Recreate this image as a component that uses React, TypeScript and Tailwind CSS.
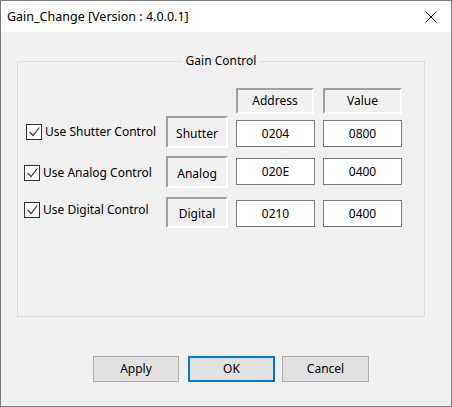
import React from "react";

const font = { fontFamily: '"Noto Sans", "Segoe UI", sans-serif' };

const CheckBox = () => (
  <span className="flex w-[16px] h-[16px] shrink-0 items-center justify-center border border-[#333333] bg-white">
    <svg width="14" height="14" viewBox="0 0 14 14" fill="none">
      <path d="M2.5 6.8 L6 10.5 L12.3 2.5" stroke="#333333" strokeWidth="1.2" />
    </svg>
  </span>
);

const Sunken = ({ children, className }: { children: React.ReactNode; className: string }) => (
  <div
    className={
      "flex items-center justify-center border-t-2 border-l-2 border-b-2 border-r-2 border-t-[#a0a0a0] border-l-[#a0a0a0] border-b-white border-r-white " +
      className
    }
  >
    {children}
  </div>
);

const Edit = ({ value, className }: { value: string; className: string }) => (
  <div className={"flex w-[79px] h-[27px] items-center justify-center border border-[#7a7a7a] bg-white " + className}>
    {value}
  </div>
);

interface RowProps {
  label: string;
  name: string;
  address: string;
  value: string;
  rowTop: string;
  boxH: string;
  checkTop: string;
  checkLeft: string;
  editTop: string;
}

const Row = ({ label, name, address, value, rowTop, boxH, checkTop, checkLeft, editTop }: RowProps) => (
  <div className={"flex items-start " + rowTop}>
    <div className={"flex w-[148px] items-center gap-[3px] " + checkTop + " " + checkLeft}>
      <CheckBox />
      <span className="leading-[16px]">{label}</span>
    </div>
    <Sunken className={"w-[62px] pt-[3px] " + boxH}>{name}</Sunken>
    <Edit value={address} className={"ml-[8px] " + editTop} />
    <Edit value={value} className={"ml-[8px] " + editTop} />
  </div>
);

export default function App() {
  return (
    <div
      className="flex w-[452px] h-[407px] flex-col border border-[#7a7a7a] bg-[#f0f0f0] text-[12px] text-black"
      style={font}
    >
      {/* Title bar */}
      <div className="flex h-[31px] shrink-0 items-center justify-between bg-white pl-[6px] pr-[14px]">
        <span className="text-[12.5px] leading-[20px]">Gain_Change [Version : 4.0.0.1]</span>
        <svg width="12" height="12" viewBox="0 0 12 12" fill="none">
          <path d="M0.5 0.5 L11.5 11.5 M11.5 0.5 L0.5 11.5" stroke="#111111" strokeWidth="1" />
        </svg>
      </div>

      {/* Client area */}
      <div className="flex flex-col">
        <fieldset className="ml-[16px] mt-[21px] w-[408px] h-[264px] border border-[#dcdcdc] p-0">
          <legend className="mx-auto px-[4px] leading-[16px]">Gain Control</legend>

          <div className="mt-[19px] flex">
            <div className="w-[218px]" />
            <Sunken className="w-[78px] h-[26px]">Address</Sunken>
            <Sunken className="ml-[9px] w-[79px] h-[26px]">Value</Sunken>
          </div>

          <Row
            label="Use Shutter Control"
            name="Shutter"
            address="0204"
            value="0800"
            rowTop="mt-[2px]"
            boxH="h-[32px]"
            checkTop="mt-[8px]"
            checkLeft="pl-[8px]"
            editTop="mt-[4px]"
          />
          <Row
            label="Use Analog Control"
            name="Analog"
            address="020E"
            value="0400"
            rowTop="mt-[8px]"
            boxH="h-[32px]"
            checkTop="mt-[9px]"
            checkLeft="pl-[6px]"
            editTop="mt-[2px]"
          />
          <Row
            label="Use Digital Control"
            name="Digital"
            address="0210"
            value="0400"
            rowTop="mt-[9px]"
            boxH="h-[31px]"
            checkTop="mt-[5px]"
            checkLeft="pl-[6px]"
            editTop="mt-[3px]"
          />
        </fieldset>

        {/* Buttons */}
        <div className="mt-[39px] flex pl-[92px]">
          <button className="flex w-[86px] h-[26px] items-center justify-center border border-[#adadad] bg-[#e1e1e1]">
            Apply
          </button>
          <button className="ml-[9px] flex w-[87px] h-[26px] items-center justify-center border-2 border-[#0078d7] bg-[#e1e1e1]">
            OK
          </button>
          <button className="ml-[7px] flex w-[87px] h-[26px] items-center justify-center border border-[#adadad] bg-[#e1e1e1]">
            Cancel
          </button>
        </div>
      </div>
    </div>
  );
}
